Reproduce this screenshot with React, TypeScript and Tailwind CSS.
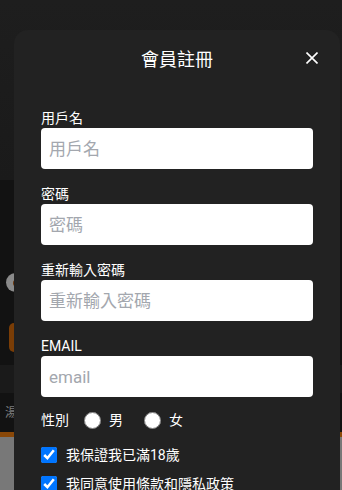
import { useState } from "react";

const fields = [
  { label: "用戶名", placeholder: "用戶名", type: "text" },
  { label: "密碼", placeholder: "密碼", type: "password" },
  { label: "重新輸入密碼", placeholder: "重新輸入密碼", type: "password" },
  { label: "EMAIL", placeholder: "email", type: "email" },
];

export default function App() {
  const [agree, setAgree] = useState({ age: true, terms: true });

  return (
    <div
      className="relative h-[490px] w-full overflow-hidden bg-[#1b1b1b]"
      style={{ fontFamily: 'Roboto, "Noto Sans CJK TC", "Noto Sans", sans-serif' }}
    >
      {/* page behind the overlay */}
      <div className="flex flex-col">
        <div className="h-[180px] bg-gradient-to-b from-[#1e1e1e] to-[#1a1a1a]" />
        <div className="flex h-[185px] flex-col bg-[#121212] pl-[6px]">
          <div className="mt-[93px] flex h-[19px] w-[19px] items-center justify-center rounded-full bg-[#8a8a8a]">
            <div className="h-[6px] w-[5px] rounded-full bg-[#6b3a12]" />
          </div>
          <div className="ml-[3px] mt-[31px] h-[29px] w-[40px] rounded-[5px] bg-[#7a3d06]" />
        </div>
        <div className="h-[28px] bg-[#1a1a1a]" />
        <div className="flex h-[39px] items-center bg-[#121212] pl-[5px] text-[12px] text-[#7d7d7d]">
          湯
        </div>
        <div className="h-[5px] bg-[#8a4808]" />
        <div className="h-[60px] bg-[#787878]" />
      </div>

      {/* modal */}
      <div className="absolute left-[14px] top-[30px] h-[480px] w-[326px] rounded-[14px] bg-[#222222] px-[27px] text-white">
        <div className="relative pt-[17px]">
          <h2 className="text-center text-[18px] leading-[26px]">會員註冊</h2>
          <button className="absolute right-[-5px] top-[22px]" aria-label="close">
            <svg width="12" height="12" viewBox="0 0 12 12" fill="none" stroke="white" strokeWidth="1.6">
              <path d="M0.5 0.5L11.5 11.5M11.5 0.5L0.5 11.5" />
            </svg>
          </button>
        </div>

        <form className="mt-[36px] flex flex-col">
          {fields.map((f, i) => (
            <div key={f.label} className={i > 0 ? "mt-[16px]" : ""}>
              <label className="block text-[14px] leading-[19px]">{f.label}</label>
              <input
                type={f.type}
                placeholder={f.placeholder}
                className="block h-[41px] w-full rounded-[4px] bg-white px-[8px] text-[17px] text-black outline-none placeholder:text-[#a3a7ae]"
              />
            </div>
          ))}

          <div className="mt-[12px] flex h-[22px] items-center text-[14px]">
            <span>性別</span>
            <input type="radio" name="sex" className="ml-[15px] h-[17px] w-[17px]" />
            <span className="ml-[8px]">男</span>
            <input type="radio" name="sex" className="ml-[21px] h-[17px] w-[17px]" />
            <span className="ml-[8px]">女</span>
          </div>

          <label className="mt-[16px] flex h-[16px] items-center text-[14px]">
            <input
              type="checkbox"
              checked={agree.age}
              onChange={() => setAgree({ ...agree, age: !agree.age })}
              className="h-4 w-4"
            />
            <span className="ml-[9px]">我保證我已滿18歲</span>
          </label>
          <label className="mt-[13px] flex h-[16px] items-center text-[14px]">
            <input
              type="checkbox"
              checked={agree.terms}
              onChange={() => setAgree({ ...agree, terms: !agree.terms })}
              className="h-4 w-4"
            />
            <span className="ml-[9px]">我同意使用條款和隱私政策</span>
          </label>
        </form>
      </div>
    </div>
  );
}
